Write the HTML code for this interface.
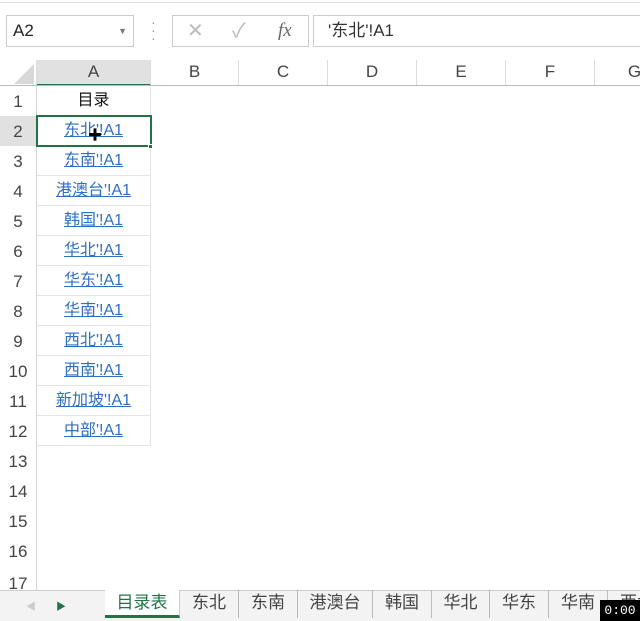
<!DOCTYPE html>
<html><head><meta charset="utf-8"><style>
*{margin:0;padding:0;box-sizing:border-box}
body{width:640px;height:621px;overflow:hidden;background:#fff;font-family:"Liberation Sans","Noto Sans CJK SC",sans-serif;position:relative;font-size:16px;color:#222}
.a{position:absolute}
.rh{position:absolute;left:0;width:37px;text-align:center;color:#444;font-size:17px;background:#fff;border-right:1px solid #d4d4d4}
.c{position:absolute;left:37px;width:114px;text-align:center;border-bottom:1px solid #e4e4e4;border-right:1px solid #e4e4e4;color:#2f6fc0;text-decoration:underline;font-size:16px}
.ch{position:absolute;top:60px;height:26px;text-align:center;line-height:24px;font-size:17px;color:#444;border-right:1px solid #ddd}
.tab{position:absolute;top:590px;height:28px;line-height:26px;font-size:17px;color:#444;border-right:1px solid #bbb;text-align:center}
</style></head><body>
<div class="a" style="left:0;top:2px;width:640px;height:1px;background:#ddd"></div>
<div class="a" style="left:6px;top:15px;width:128px;height:32px;border:1px solid #ccc;font-size:17px;line-height:30px;padding-left:6px">A2<span style="position:absolute;right:6px;top:0;font-size:9px;color:#777">▼</span></div>
<div class="a" style="left:151px;top:18px;color:#999;font-size:14px;line-height:8px">·<br>·<br>·</div>
<div class="a" style="left:172px;top:15px;width:137px;height:32px;border:1px solid #ccc"></div>
<div class="a" style="left:187px;top:15px;color:#bbb;font-size:20px;line-height:32px">✕</div>
<div class="a" style="left:232px;top:15px;color:#bbb;font-size:20px;line-height:32px">✓</div>
<div class="a" style="left:278px;top:15px;height:32px;line-height:31px;font-family:'Liberation Serif',serif;font-style:italic;color:#666;font-size:19px">fx</div>
<div class="a" style="left:313px;top:15px;width:340px;height:32px;border:1px solid #ccc;font-size:17px;line-height:30px;padding-left:14px;color:#333">'东北'!A1</div>
<div class="a" style="left:0;top:60px;width:37px;height:26px;background:#fff;border-right:1px solid #ddd"></div>
<div class="a" style="left:14px;top:64px;width:0;height:0;border-left:20px solid transparent;border-bottom:20px solid #d8d8d8"></div>
<div class="ch" style="left:37px;width:114px;background:#e1e1e1;border-bottom:2px solid #217346">A</div>
<div class="ch" style="left:151px;width:88px">B</div>
<div class="ch" style="left:239px;width:89px">C</div>
<div class="ch" style="left:328px;width:89px">D</div>
<div class="ch" style="left:417px;width:89px">E</div>
<div class="ch" style="left:506px;width:89px">F</div>
<div class="ch" style="left:595px;width:80px">G</div>
<div class="a" style="left:0;top:85px;width:640px;height:1px;background:#bbb"></div>
<div class="rh" style="top:86px;height:30px;line-height:32px">1</div>
<div class="rh" style="top:116px;height:30px;line-height:32px;background:#e1e1e1">2</div>
<div class="rh" style="top:146px;height:30px;line-height:32px">3</div>
<div class="rh" style="top:176px;height:30px;line-height:32px">4</div>
<div class="rh" style="top:206px;height:30px;line-height:32px">5</div>
<div class="rh" style="top:236px;height:30px;line-height:32px">6</div>
<div class="rh" style="top:266px;height:30px;line-height:32px">7</div>
<div class="rh" style="top:296px;height:30px;line-height:32px">8</div>
<div class="rh" style="top:326px;height:30px;line-height:32px">9</div>
<div class="rh" style="top:356px;height:30px;line-height:32px">10</div>
<div class="rh" style="top:386px;height:30px;line-height:32px">11</div>
<div class="rh" style="top:416px;height:30px;line-height:32px">12</div>
<div class="rh" style="top:446px;height:30px;line-height:32px">13</div>
<div class="rh" style="top:476px;height:30px;line-height:32px">14</div>
<div class="rh" style="top:506px;height:30px;line-height:32px">15</div>
<div class="rh" style="top:536px;height:30px;line-height:32px">16</div>
<div class="rh" style="top:566px;height:24px;line-height:36px;overflow:hidden">17</div>
<div class="c" style="top:86px;height:30px;line-height:29px;color:#111;text-decoration:none">目录</div>
<div class="c" style="top:116px;height:30px;line-height:29px">东北'!A1</div>
<div class="c" style="top:146px;height:30px;line-height:29px">东南'!A1</div>
<div class="c" style="top:176px;height:30px;line-height:29px">港澳台'!A1</div>
<div class="c" style="top:206px;height:30px;line-height:29px">韩国'!A1</div>
<div class="c" style="top:236px;height:30px;line-height:29px">华北'!A1</div>
<div class="c" style="top:266px;height:30px;line-height:29px">华东'!A1</div>
<div class="c" style="top:296px;height:30px;line-height:29px">华南'!A1</div>
<div class="c" style="top:326px;height:30px;line-height:29px">西北'!A1</div>
<div class="c" style="top:356px;height:30px;line-height:29px">西南'!A1</div>
<div class="c" style="top:386px;height:30px;line-height:29px">新加坡'!A1</div>
<div class="c" style="top:416px;height:30px;line-height:29px">中部'!A1</div>
<div class="a" style="left:36px;top:115px;width:116px;height:32px;border:2px solid #217346"></div>
<div class="a" style="left:148px;top:144px;width:5px;height:5px;background:#217346;border:1px solid #fff"></div>
<div class="a" style="left:88px;top:125px;font-size:14px;color:#000">✚</div>
<div class="a" style="left:0;top:590px;width:640px;height:31px;background:#f3f3f3;border-top:1px solid #ccc"></div>
<div class="a" style="left:26px;top:598px;color:#ccc;font-size:10px">◀</div>
<div class="a" style="left:56px;top:598px;color:#217346;font-size:10px">▶</div>
<div class="tab" style="left:105px;width:75px;background:#fff;color:#217346;border-bottom:3px solid #217346;border-right:1px solid #ccc">目录表</div>
<div class="tab" style="left:180px;width:59px">东北</div>
<div class="tab" style="left:239px;width:59px">东南</div>
<div class="tab" style="left:298px;width:75px">港澳台</div>
<div class="tab" style="left:373px;width:59px">韩国</div>
<div class="tab" style="left:432px;width:58px">华北</div>
<div class="tab" style="left:490px;width:59px">华东</div>
<div class="tab" style="left:549px;width:59px">华南</div>
<div class="tab" style="left:608px;width:60px;text-align:left;padding-left:12px;border:none">西北</div>
<div class="a" style="left:600px;top:600px;width:40px;height:21px;background:#000;color:#fff;font-family:'Liberation Mono',monospace;font-size:13px;line-height:21px;text-align:center">0:00</div>
</body></html>
